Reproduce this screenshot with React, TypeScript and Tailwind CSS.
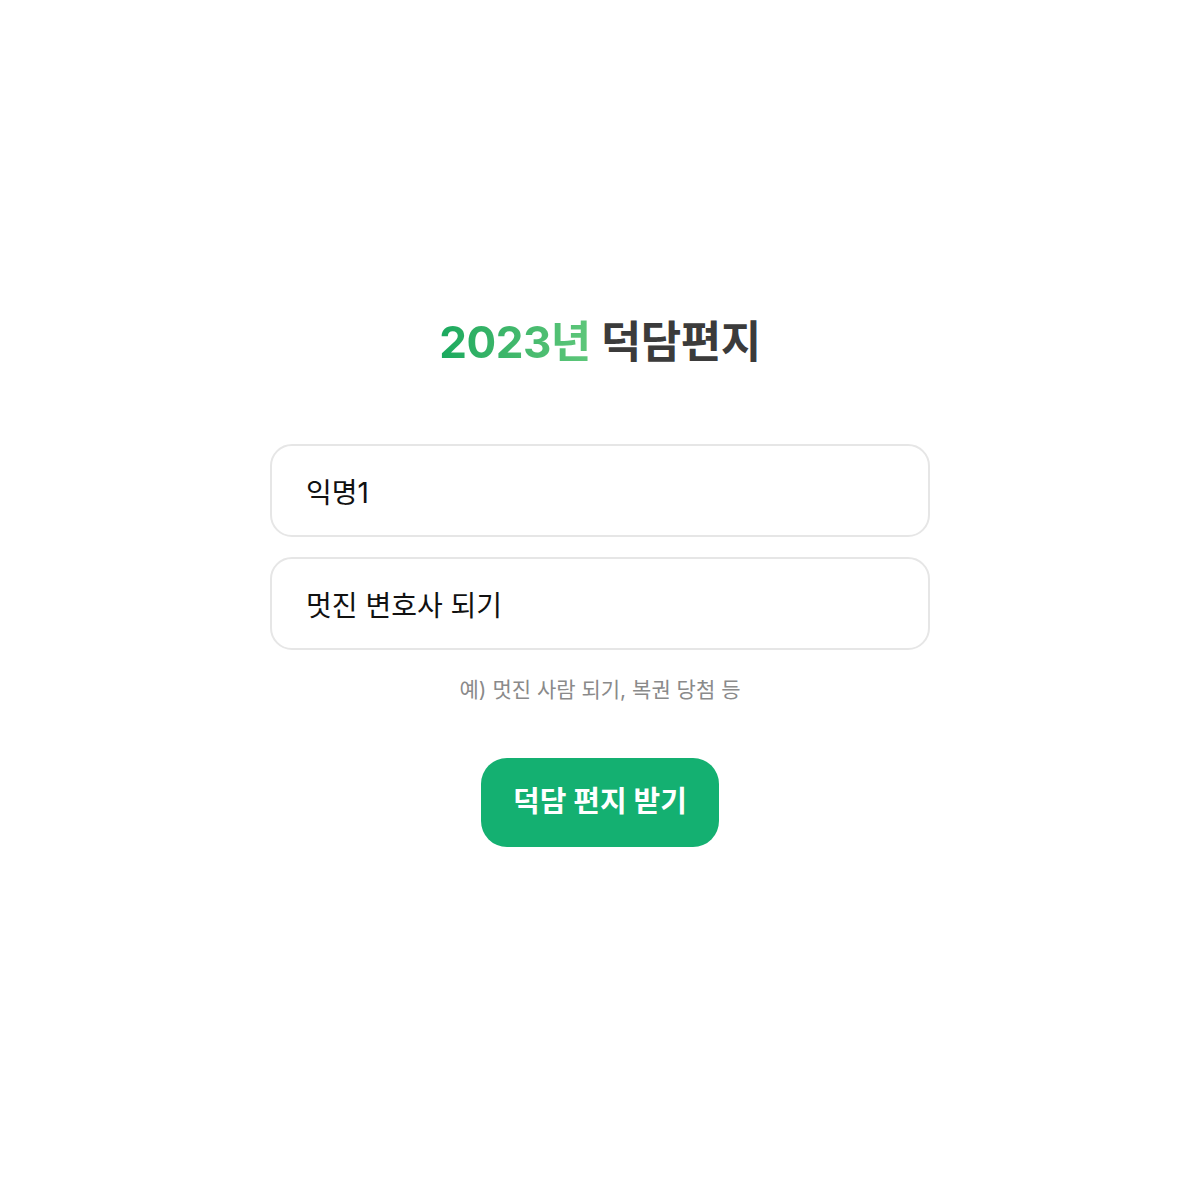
import { useState } from "react";

export default function App() {
    const [name, setName] = useState("익명1");
    const [wish, setWish] = useState("멋진 변호사 되기");

    return (
        <div className="min-h-[1200px] bg-white flex flex-col items-center pt-[312px] font-['Inter','Noto_Sans_CJK_KR',sans-serif]">
            {/* Title */}
            <h1 className="text-[44px] leading-[60px] font-bold tracking-[-0.5px]">
                <span className="bg-gradient-to-r from-[#17a95e] to-[#5ec77a] bg-clip-text text-transparent">2023년</span>
                <span className="text-[#3b3b3b]"> 덕담편지</span>
            </h1>

            <form className="mt-[72px] w-[660px] flex flex-col gap-5" onSubmit={(e) => e.preventDefault()}>
                <input
                    value={name}
                    onChange={(e) => setName(e.target.value)}
                    className="h-[93px] w-full rounded-[22px] border-2 border-[#e6e6e6] px-[34px] text-[28px] text-[#111] outline-none"
                />
                <input
                    value={wish}
                    onChange={(e) => setWish(e.target.value)}
                    className="h-[93px] w-full rounded-[22px] border-2 border-[#e6e6e6] px-[34px] text-[28px] text-[#111] outline-none"
                />
                <p className="mt-1 text-center text-[21px] text-[#8a8a8a]">예) 멋진 사람 되기, 복권 당첨 등</p>
                <div className="mt-[32px] flex justify-center">
                    <button
                        type="submit"
                        className="h-[89px] w-[238px] rounded-[26px] bg-[#14b071] text-[29px] font-bold text-white"
                    >
                        덕담 편지 받기
                    </button>
                </div>
            </form>
        </div>
    );
}
